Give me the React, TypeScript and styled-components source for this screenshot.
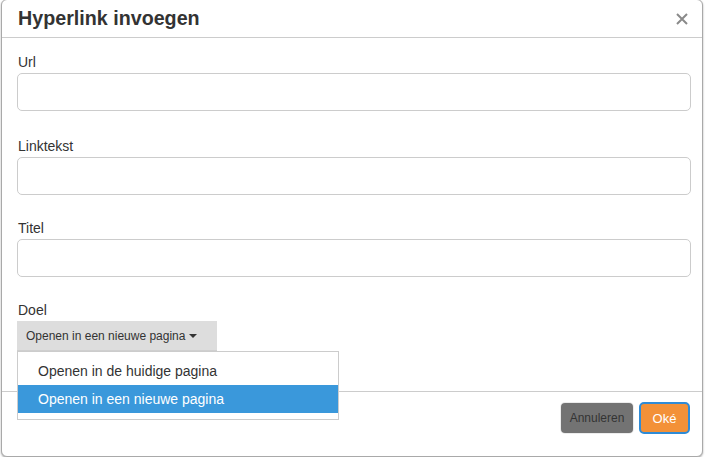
import styled, { createGlobalStyle } from "styled-components"

const GlobalStyle = createGlobalStyle`
    html, body {
        margin: 0;
        padding: 0;
        background: #ffffff;
    }
    body {
        font-family: "Liberation Sans", Arial, sans-serif;
        color: #333333;
    }
`

const Dialog = styled.div`
    box-sizing: border-box;
    margin: -1px 3px 0 1px;
    height: 458px;
    border: 1px solid #a9a9a9;
    border-radius: 6px;
    background: #ffffff;
    box-shadow: 0 1px 2px rgba(0, 0, 0, 0.35);
    display: flex;
    flex-direction: column;
`

const Header = styled.div`
    box-sizing: border-box;
    height: 38px;
    padding: 0 10px 0 16px;
    display: flex;
    align-items: center;
    justify-content: space-between;
    border-bottom: 1px solid #cccccc;
`

const Title = styled.h4`
    margin: 0;
    font-size: 19.7px;
    font-weight: bold;
    color: #333333;
`

const CloseButton = styled.button`
    border: none;
    background: none;
    padding: 0;
    width: 20px;
    height: 20px;
    display: flex;
    align-items: center;
    justify-content: center;
    cursor: pointer;
`

const Body = styled.div`
    flex: 1;
    padding: 16px 11px 0 15px;
`

const Field = styled.div`
    display: flex;
    flex-direction: column;
    margin-bottom: 25px;
    &:first-child {
        margin-bottom: 27px;
    }
`

const Label = styled.label`
    font-size: 14px;
    line-height: 16px;
    color: #333333;
    margin-bottom: 3px;
    padding-left: 1px;
`

const TextInput = styled.input`
    box-sizing: border-box;
    height: 38px;
    width: 100%;
    border: 1px solid #cccccc;
    border-radius: 5px;
    padding: 0 10px;
    font-size: 14px;
    font-family: inherit;
    outline: none;
`

const DropdownWrapper = styled.div`
    position: relative;
    align-self: flex-start;
`

const DropdownButton = styled.button`
    box-sizing: border-box;
    width: 200px;
    height: 30px;
    padding: 0 9px;
    border: none;
    border-bottom: 1px solid #cfcfcf;
    background: #dddddd;
    display: flex;
    align-items: center;
    gap: 4px;
    font-family: inherit;
    font-size: 12px;
    color: #333333;
    cursor: pointer;
`

const Caret = styled.span`
    width: 0;
    height: 0;
    border-left: 4px solid transparent;
    border-right: 4px solid transparent;
    border-top: 4px solid #333333;
`

const Menu = styled.ul`
    position: absolute;
    top: 30px;
    left: 0;
    z-index: 10;
    box-sizing: border-box;
    width: 322px;
    margin: 0;
    padding: 5px 0 6px;
    list-style: none;
    background: #ffffff;
    border: 1px solid #cccccc;
`

const MenuItem = styled.li<{ $active?: boolean }>`
    height: 28px;
    padding: 0 20px;
    display: flex;
    align-items: center;
    font-size: 14px;
    background: ${(p) => (p.$active ? "#3a98db" : "transparent")};
    color: ${(p) => (p.$active ? "#ffffff" : "#333333")};
`

const Footer = styled.div`
    box-sizing: border-box;
    height: 65px;
    padding: 10px 12px 0;
    border-top: 1px solid #cccccc;
    display: flex;
    justify-content: flex-end;
    align-items: flex-start;
    gap: 6px;
`

const Button = styled.button<{ $primary?: boolean }>`
    box-sizing: border-box;
    font-family: inherit;
    border-radius: 4px;
    cursor: pointer;
    ${(p) =>
        p.$primary
            ? `
        width: 51px;
        height: 32px;
        padding: 0;
        font-size: 13px;
        background: #f39138;
        color: #ffffff;
        border: 2px solid #2f8bd6;
        border-radius: 5px;
    `
            : `
        width: 72px;
        height: 30px;
        margin-top: 1px;
        padding: 0;
        font-size: 12px;
        background: #737373;
        color: #333333;
        border: none;
        box-shadow: 0 0 0 1px #ececec;
    `}
`

function CloseIcon() {
    return (
        <svg width="12" height="12" viewBox="0 0 12 12">
            <path d="M1 1 L11 11 M11 1 L1 11" stroke="#8a8a8a" strokeWidth="2" />
        </svg>
    )
}

export default function App() {
    return (
        <>
            <GlobalStyle />
            <Dialog>
                <Header>
                    <Title>Hyperlink invoegen</Title>
                    <CloseButton>
                        <CloseIcon />
                    </CloseButton>
                </Header>
                <Body>
                    <Field>
                        <Label>Url</Label>
                        <TextInput />
                    </Field>
                    <Field>
                        <Label>Linktekst</Label>
                        <TextInput />
                    </Field>
                    <Field>
                        <Label>Titel</Label>
                        <TextInput />
                    </Field>
                    <Field>
                        <Label>Doel</Label>
                        <DropdownWrapper>
                            <DropdownButton>
                                Openen in een nieuwe pagina <Caret />
                            </DropdownButton>
                            <Menu>
                                <MenuItem>Openen in de huidige pagina</MenuItem>
                                <MenuItem $active>Openen in een nieuwe pagina</MenuItem>
                            </Menu>
                        </DropdownWrapper>
                    </Field>
                </Body>
                <Footer>
                    <Button>Annuleren</Button>
                    <Button $primary>Oké</Button>
                </Footer>
            </Dialog>
        </>
    )
}
